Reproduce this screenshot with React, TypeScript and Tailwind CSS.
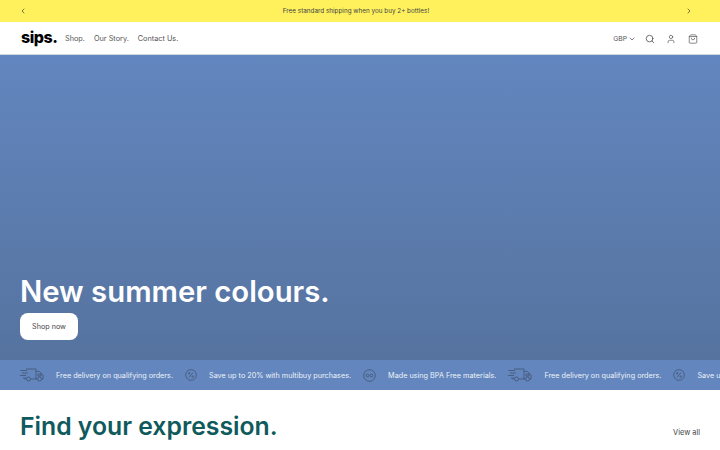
import React from "react";
import { ChevronLeft, ChevronRight, ChevronDown, Search, User, ShoppingBag } from "lucide-react";

const Truck = () => (
  <svg width="24" height="14" viewBox="0 0 24 14" fill="none" stroke="#46597a" strokeWidth="0.9" className="shrink-0">
    <path d="M6 1h10v10H11M6 11H4.5M16 3.5h3.5L23 7v4h-1.5M16 11h1.5" />
    <path d="M0.5 2.5H7M2 5h6M0 7.5h6M3 10h3" />
    <circle cx="8.5" cy="11" r="2" />
    <circle cx="19.5" cy="11" r="2" />
    <path d="M18 6h3v2h-3z" />
  </svg>
);

const Percent = () => (
  <svg width="12" height="12" viewBox="0 0 13 13" fill="none" stroke="#46597a" strokeWidth="0.9" className="shrink-0">
    <circle cx="6.5" cy="6.5" r="5.8" />
    <path d="M4.3 9 8.7 4" />
    <circle cx="4.6" cy="4.7" r="0.9" />
    <circle cx="8.4" cy="8.3" r="0.9" />
  </svg>
);

const Bpa = () => (
  <svg width="13" height="13" viewBox="0 0 13 13" fill="none" stroke="#46597a" strokeWidth="0.9" className="shrink-0">
    <circle cx="6.5" cy="6.5" r="5.8" />
    <circle cx="4.5" cy="6.5" r="1.4" />
    <circle cx="8.5" cy="6.5" r="1.4" />
  </svg>
);

const Strip = ({ icon, text }: { icon: React.ReactNode; text: string }) => (
  <div className="flex items-center shrink-0 gap-3">
    {icon}
    <span className="whitespace-nowrap text-[7.25px] text-[#eef2f8] pt-[2px]">{text}</span>
  </div>
);

export default function App() {
  return (
    <div className="w-[720px] h-[450px] overflow-hidden bg-white font-['Inter','Liberation_Sans',sans-serif] text-[#3d3d3d]">
      <div className="h-[22px] bg-[#fff15c] flex items-center justify-between pl-[19px] pr-[27px]">
        <ChevronLeft size={8} strokeWidth={2} color="#333" />
        <span className="text-[6.35px] text-[#444] pt-[2px]">Free standard shipping when you buy 2+ bottles!</span>
        <ChevronRight size={8} strokeWidth={2} color="#333" />
      </div>
      <header className="h-[33px] bg-white border-b border-[#cfd8e3] flex items-center justify-between pl-[21px] pr-[22px]">
        <div className="flex items-center">
          <span className="text-[16px] leading-none font-extrabold text-black tracking-[-0.03em] w-[44px] pb-[2px]">sips.</span>
          <nav className="flex items-center gap-[9px] text-[7.3px] text-[#555] pt-[2px]">
            <span>Shop.</span>
            <span>Our Story.</span>
            <span>Contact Us.</span>
          </nav>
        </div>
        <div className="flex items-center text-[#444]">
          <span className="text-[6.8px] text-[#555] pt-[2px]">GBP</span>
          <ChevronDown size={8} strokeWidth={2} className="ml-[1px] mr-[9px] mt-[1px]" />
          <Search size={10} strokeWidth={1.8} className="mr-[11px] mt-[1px]" />
          <User size={10} strokeWidth={1.5} className="mr-[12px] mt-[1px]" />
          <ShoppingBag size={10} strokeWidth={1.5} className="mt-[1px]" />
        </div>
      </header>
      <section className="h-[305px] bg-gradient-to-b from-[#6286bf] to-[#56739f] flex flex-col justify-end items-start px-5 pb-5">
        <h1 className="text-[29.3px] leading-[44px] font-semibold text-white mb-[-1px]">New summer colours.</h1>
        <button className="w-[58px] h-[27px] bg-white rounded-lg text-[7.2px] text-[#444] flex items-center justify-center pt-[2px]">Shop now</button>
      </section>
      <div className="h-[30px] bg-[#6286bd] flex items-center pl-5 gap-3 overflow-hidden">
        <Strip icon={<Truck />} text="Free delivery on qualifying orders." />
        <Strip icon={<Percent />} text="Save up to 20% with multibuy purchases." />
        <Strip icon={<Bpa />} text="Made using BPA Free materials." />
        <Strip icon={<Truck />} text="Free delivery on qualifying orders." />
        <Strip icon={<Percent />} text="Save up to 20% with multibuy purchases." />
      </div>
      <section className="flex items-center justify-between px-5 pt-[18px]">
        <h2 className="text-[24.75px] leading-[37px] font-semibold text-[#0f5a5c]">Find your expression.</h2>
        <a className="text-[7.4px] text-[#444] pt-[12px]">View all</a>
      </section>
    </div>
  );
}
